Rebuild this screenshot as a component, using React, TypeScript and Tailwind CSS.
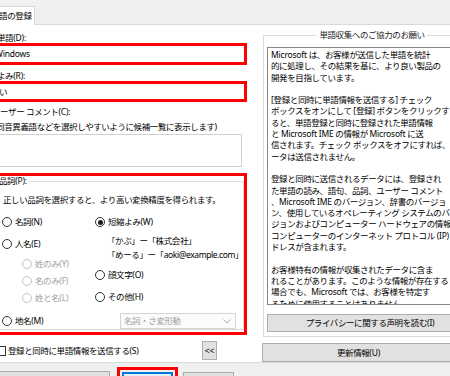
import React from "react";

// Latin runs get a little less tightening than CJK
function T({ children }: { children: string }) {
  const parts = children.split(/([A-Za-z0-9@.:()\[\]<>]+(?: [A-Za-z0-9@.:()\[\]<>]+)*)/);
  return (
    <>
      {parts.map((p, i) =>
        i % 2 === 1 ? (
          <span key={i} className="tracking-[-0.2px]">
            {p}
          </span>
        ) : (
          p
        )
      )}
    </>
  );
}

function Radio({ checked, disabled }: { checked?: boolean; disabled?: boolean }) {
  return (
    <span
      className={`w-[10px] h-[10px] rounded-full border shrink-0 flex items-center justify-center bg-white ${
        disabled ? "border-[#c4c4c4]" : "border-[#333333]"
      }`}
    >
      {checked && <span className="w-[5px] h-[5px] rounded-full bg-[#1a1a1a]" />}
    </span>
  );
}

function RadioItem({
  label,
  checked,
  disabled,
  className = "",
}: {
  label: string;
  checked?: boolean;
  disabled?: boolean;
  className?: string;
}) {
  return (
    <div className={`h-[12px] flex items-center gap-[3px] whitespace-nowrap ${className}`}>
      <Radio checked={checked} disabled={disabled} />
      <span className={disabled ? "text-[#a0a0a0]" : ""}>
        <T>{label}</T>
      </span>
    </div>
  );
}

function Chevron({ up, color = "#606060" }: { up?: boolean; color?: string }) {
  return (
    <svg width="8" height="5" viewBox="0 0 8 5">
      <polyline
        points={up ? "0.5,4.5 4,1 7.5,4.5" : "0.5,0.5 4,4 7.5,0.5"}
        fill="none"
        stroke={color}
        strokeWidth="1"
      />
    </svg>
  );
}

const infoLines = [
  "Microsoft は、お客様が送信した単語を統計",
  "的に処理し、その結果を基に、より良い製品の",
  "開発を目指しています。",
  "",
  "[登録と同時に単語情報を送信する] チェック",
  "ボックスをオンにして [登録] ボタンをクリックす",
  "ると、単語登録と同時に登録された単語情報",
  "と Microsoft IME の情報が Microsoft に送",
  "信されます。チェック ボックスをオフにすれば、デ",
  "ータは送信されません。",
  "",
  "登録と同時に送信されるデータには、登録され",
  "た単語の読み、語句、品詞、ユーザー コメント",
  "、Microsoft IME のバージョン、辞書のバージョ",
  "ン、使用しているオペレーティング システムのバー",
  "ジョンおよびコンピューター ハードウェアの情報、",
  "コンピューターのインターネット プロトコル (IP) ア",
  "ドレスが含まれます。",
  "",
  "お客様特有の情報が収集されたデータに含ま",
  "れることがあります。このような情報が存在する",
  "場合でも、Microsoft では、お客様を特定す",
  "るために使用することはありません。",
];

export default function App() {
  return (
    <div className="w-[450px] h-[376px] overflow-hidden bg-[#f0f0f0] text-black text-[8.5px] tracking-[-0.4px] leading-[10px] font-['Noto_Sans','Noto_Sans_CJK_JP',sans-serif] flex flex-col">
      {/* tab strip */}
      <div className="h-[25px] flex items-end shrink-0">
        <div className="h-[19px] w-[45px] -ml-[10px] bg-white border-t border-r border-[#d9d9d9] flex items-center pl-[1px] whitespace-nowrap shrink-0">
          単語の登録
        </div>
        <div className="flex-1 border-b border-[#d9d9d9]" />
      </div>

      {/* tab page */}
      <div className="h-[338px] shrink-0 bg-white border-b border-[#d9d9d9] flex overflow-hidden">
        {/* left column */}
        <div className="-ml-[10px] w-[257px] shrink-0 flex flex-col">
          <div className="mt-[8px] h-[10px] pl-[7px] whitespace-nowrap">
            <T>単語(D):</T>
          </div>
          <div className="h-[22px] border-[3px] border-[#ff0000] flex items-center pl-[2px] whitespace-nowrap tracking-[-0.2px]">
            Windows
          </div>
          <div className="mt-[6px] h-[10px] pl-[7px] whitespace-nowrap">
            <T>よみ(R):</T>
          </div>
          <div className="h-[21px] border-[3px] border-[#ff0000] flex items-center pl-[6px] whitespace-nowrap">
            い
          </div>
          <div className="mt-[5px] h-[10px] pl-[2px] whitespace-nowrap">
            <T>ユーザー コメント(C):</T>
          </div>
          <div className="mt-[5px] h-[10px] pl-[4px] whitespace-nowrap">
            (同音異義語などを選択しやすいように候補一覧に表示します)
          </div>
          <div className="mt-[2px] h-[33px] mr-[5px] border border-[#d0d0d0] bg-white" />

          {/* part of speech */}
          <div className="mt-[6px] h-[162px] border-[3px] border-[#ff0000]">
            <fieldset className="h-[154px] mr-[3px] border border-[#dcdcdc] pl-[5px]">
              <legend className="h-[10px] leading-[10px] pr-[2px] whitespace-nowrap">
                <T>品詞(P):</T>
              </legend>
              <div className="mt-[9px] h-[10px] pl-[4px] whitespace-nowrap">
                正しい品詞を選択すると、より高い変換精度を得られます。
              </div>
              <div className="mt-[11px] flex">
                <div className="w-[96px] pl-[3px] flex flex-col shrink-0">
                  <RadioItem label="名詞(N)" />
                  <RadioItem label="人名(E)" className="mt-[10px]" />
                  <RadioItem label="姓のみ(Y)" disabled className="mt-[8px] pl-[20px]" />
                  <RadioItem label="名のみ(F)" disabled className="mt-[5px] pl-[20px]" />
                  <RadioItem label="姓と名(L)" disabled className="mt-[5px] pl-[20px]" />
                </div>
                <div className="flex flex-col">
                  <RadioItem label="短縮よみ(W)" checked />
                  <div className="mt-[7px] h-[12px] leading-[12px] pl-[12px] whitespace-nowrap">
                    「かぶ」ー「株式会社」
                  </div>
                  <div className="mt-[2px] h-[12px] leading-[12px] pl-[12px] whitespace-nowrap">
                    「めーる」ー「aoki@example.com」
                  </div>
                  <RadioItem label="顔文字(O)" className="mt-[8px]" />
                  <RadioItem label="その他(H)" className="mt-[10px]" />
                </div>
              </div>
              <div className="mt-[9px] h-[16px] flex items-center">
                <div className="w-[121px] pl-[3px] shrink-0">
                  <RadioItem label="地名(M)" />
                </div>
                <div className="w-[116px] h-[16px] border border-[#d5d5d5] bg-[#fbfbfb] flex items-center justify-between pl-[3px] pr-[4px] text-[#a0a0a0] whitespace-nowrap">
                  <span>名詞・さ変形動</span>
                  <Chevron color="#b0b0b0" />
                </div>
              </div>
            </fieldset>
          </div>

          <div className="mt-[5px] h-[21px] flex items-center">
            <span className="ml-[6px] w-[10px] h-[10px] border border-[#333333] bg-white shrink-0" />
            <span className="ml-[2px] whitespace-nowrap">
              <T>登録と同時に単語情報を送信する(S)</T>
            </span>
            <div className="ml-auto mr-[30px] w-[15px] h-[19px] bg-[#e1e1e1] border border-[#adadad] flex items-center justify-center tracking-normal">
              &lt;&lt;
            </div>
          </div>
        </div>

        {/* right column */}
        <div className="ml-[15px] w-[200px] shrink-0 flex flex-col">
          <fieldset className="mt-[5px] ml-[1px] w-[196px] border border-[#dcdcdc] px-[3px] pb-[4px]">
            <legend className="mx-auto h-[10px] leading-[10px] px-[2px] text-[#222222] whitespace-nowrap">
              単語収集へのご協力のお願い
            </legend>
            <div className="mt-[7px] h-[258px] border border-[#828790] bg-white flex">
              <div className="flex-1 overflow-hidden pl-[3px] pt-[1px] leading-[11.3px]">
                {infoLines.map((line, i) => (
                  <div key={i} className="h-[11.3px] whitespace-nowrap">
                    {line ? <T>{line}</T> : "\u00a0"}
                  </div>
                ))}
              </div>
              <div className="w-[17px] bg-[#f0f0f0] flex flex-col shrink-0">
                <div className="h-[17px] flex items-center justify-center">
                  <Chevron up />
                </div>
                <div className="mt-[2px] mx-[1px] h-[155px] bg-[#cdcdcd]" />
                <div className="flex-1" />
                <div className="h-[17px] flex items-center justify-center">
                  <Chevron />
                </div>
              </div>
            </div>
            <div className="mt-[9px] mr-[4px] h-[18px] bg-[#e1e1e1] border border-[#adadad] flex items-center justify-center whitespace-nowrap">
              <T>プライバシーに関する声明を読む(I)</T>
            </div>
          </fieldset>
          <div className="mt-[6px] w-[193px] h-[19px] bg-[#e1e1e1] border border-[#adadad] flex items-center justify-center whitespace-nowrap">
            <T>更新情報(U)</T>
          </div>
        </div>
      </div>

      {/* bottom buttons */}
      <div className="flex-1 flex items-start">
        <div className="-ml-[10px] mt-[8px] w-[120px] h-[20px] bg-[#e1e1e1] border border-[#adadad] shrink-0" />
        <div className="ml-[7px] mt-[4px] w-[61px] h-[24px] border-[3px] border-[#ff0000] shrink-0">
          <div className="ml-[2px] mt-[2px] w-[51px] h-[20px] border-2 border-[#0078d7] bg-[#e5f1fb]" />
        </div>
        <div className="ml-[5px] mt-[9px] w-[51px] h-[20px] bg-[#e1e1e1] border border-[#adadad] shrink-0" />
      </div>
    </div>
  );
}
